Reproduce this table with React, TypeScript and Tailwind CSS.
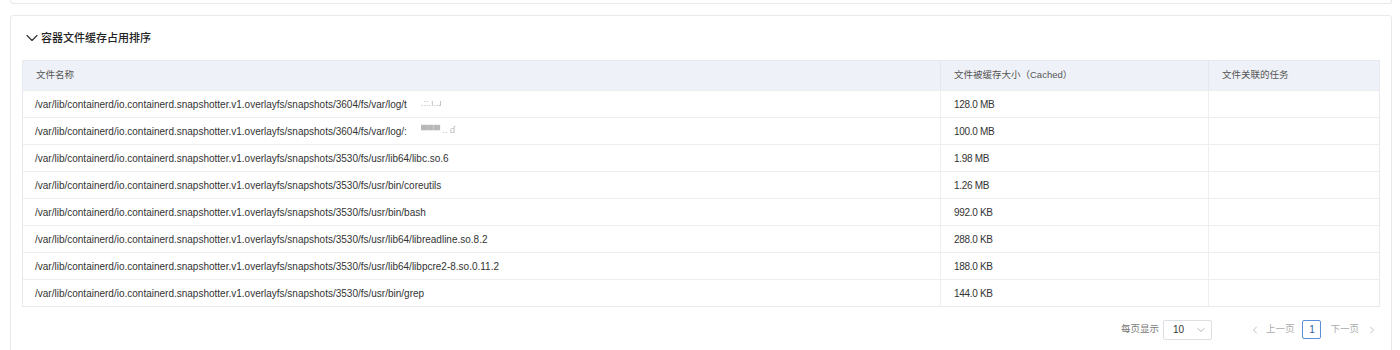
import React from 'react';
import { ChevronDown, ChevronLeft, ChevronRight } from 'lucide-react';

const PREFIX = '/var/lib/containerd/io.containerd.snapshotter.v1.overlayfs/snapshots/';

type Row = { path: string; blurred?: string; size: string };

const rows: Row[] = [
    { path: PREFIX + '3604/fs/var/log/t', blurred: '.::.ı..ɹ', size: '128.0 MB' },
    { path: PREFIX + '3604/fs/var/log/:', blurred: '▀▀▀ .. ɗ', size: '100.0 MB' },
    { path: PREFIX + '3530/fs/usr/lib64/libc.so.6', size: '1.98 MB' },
    { path: PREFIX + '3530/fs/usr/bin/coreutils', size: '1.26 MB' },
    { path: PREFIX + '3530/fs/usr/bin/bash', size: '992.0 KB' },
    { path: PREFIX + '3530/fs/usr/lib64/libreadline.so.8.2', size: '288.0 KB' },
    { path: PREFIX + '3530/fs/usr/lib64/libpcre2-8.so.0.11.2', size: '188.0 KB' },
    { path: PREFIX + '3530/fs/usr/bin/grep', size: '144.0 KB' },
];

const font = "font-['Helvetica','Liberation_Sans','Noto_Sans_CJK_SC',sans-serif]";

export default function App() {
    return (
        <div className={`w-full h-[350px] overflow-hidden bg-white ${font}`}>
            {/* previous card, cut off at the top */}
            <div className="ml-[10px] mr-[8px] h-[4px] border border-t-0 border-[#e9e9e9] rounded-b-[3px]" />

            <div className="ml-[10px] mr-[8px] mt-[11px] h-[400px] border border-[#e9e9e9] rounded-[3px] px-[11px]">
                <div className="h-[44px] flex items-center">
                    <ChevronDown className="w-[20px] h-[20px] text-[#333] -mr-[1px]" strokeWidth={1.4} />
                    <span className="text-[11px] font-medium text-[#222]">容器文件缓存占用排序</span>
                </div>

                <div className="border border-[#e6e9ee] text-[10px]">
                    <div className="flex h-[29px] bg-[#eef1f7] text-[9.5px] text-[#555]">
                        <div className="w-[918px] flex items-center pl-[13px] border-r border-[#e3e7ee]">文件名称</div>
                        <div className="w-[268px] flex items-center pl-[13px] border-r border-[#e3e7ee]">文件被缓存大小（Cached）</div>
                        <div className="flex-1 flex items-center pl-[13px]">文件关联的任务</div>
                    </div>
                    {rows.map((r, i) => (
                        <div key={i} className="flex h-[27px] border-t border-[#eceef2] text-[#333]">
                            <div className="w-[918px] flex items-center pl-[12px] border-r border-[#eceef2] whitespace-nowrap">
                                {r.path}
                                {r.blurred && (
                                    <span className="ml-[14px] text-[9px] text-[#b8b8b8] blur-[0.6px]">{r.blurred}</span>
                                )}
                            </div>
                            <div className="w-[268px] flex items-center pl-[13px] border-r border-[#eceef2] tracking-[-0.3px] whitespace-pre">{r.size}</div>
                            <div className="flex-1" />
                        </div>
                    ))}
                </div>

                <div className="h-[45px] flex items-center justify-end text-[9.5px] text-[#777] pr-[2px]">
                    <span className="mr-[4px]">每页显示</span>
                    <div className="w-[49px] h-[20px] border border-[#dcdfe4] rounded-[2px] flex items-center justify-between pl-[9px] pr-[4px] text-[#333] text-[10px]">
                        <span>10</span>
                        <ChevronDown className="w-[12px] h-[12px] text-[#999]" strokeWidth={1.5} />
                    </div>
                    <div className="ml-[37px] flex items-center gap-[5px] text-[#aaa]">
                        <ChevronLeft className="w-[12px] h-[12px]" strokeWidth={1.5} />
                        <span>上一页</span>
                    </div>
                    <div className="ml-[8px] w-[19px] h-[19px] border border-[#5b8fd8] rounded-[2px] flex items-center justify-center text-[#2f5ea8] text-[10px]">1</div>
                    <div className="ml-[9px] flex items-center gap-[7px] text-[#aaa]">
                        <span>下一页</span>
                        <ChevronRight className="w-[12px] h-[12px]" strokeWidth={1.5} />
                    </div>
                </div>
            </div>
        </div>
    );
}
